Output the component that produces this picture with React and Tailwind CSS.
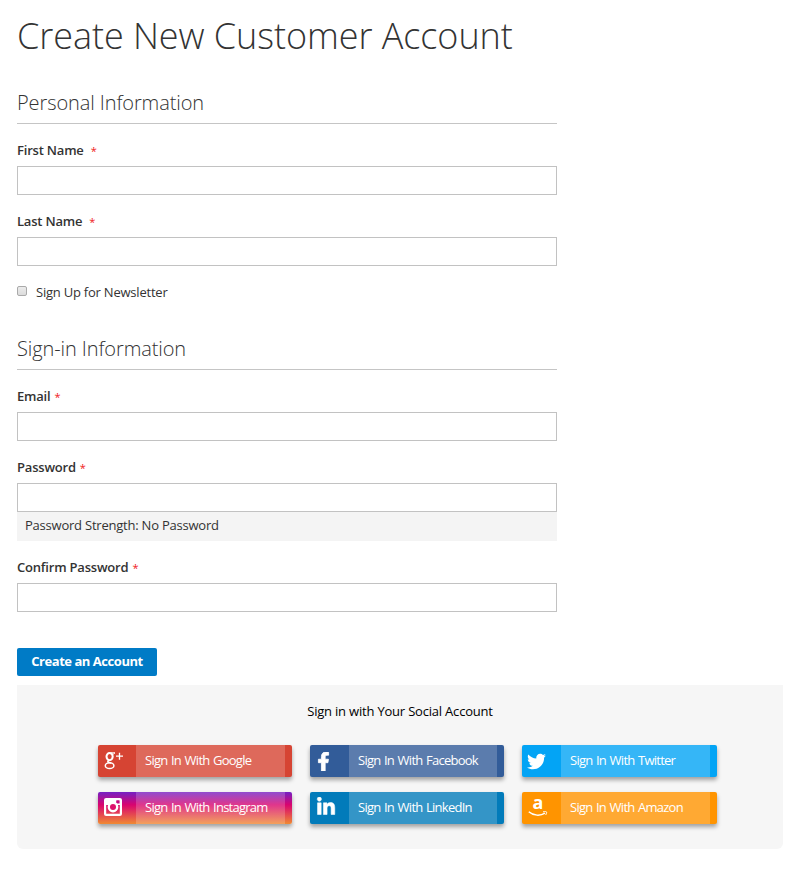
import { FaFacebookF, FaLinkedinIn, FaTwitter } from "react-icons/fa";

const GooglePlusIcon = () => (
  <svg width="20" height="20" viewBox="0 0 20 20" fill="none" stroke="currentColor">
    <ellipse cx="5.6" cy="5.6" rx="3.1" ry="3.6" strokeWidth="2" />
    <path d="M6.5 1.8H11L9.6 3H7.5" strokeWidth="1" />
    <path d="M5.2 9.3C2.6 10.6 4.2 11.7 7 12" strokeWidth="1.7" />
    <ellipse cx="5.6" cy="14.7" rx="4.3" ry="2.9" strokeWidth="1.5" />
    <path d="M12 5.2H19M15.5 1.7V8.7" strokeWidth="1.3" />
  </svg>
);

const InstagramIcon = () => (
  <svg width="18" height="18" viewBox="0 0 18 18" fill="none" stroke="currentColor">
    <rect x="1.1" y="1.1" width="15.8" height="15.8" rx="1" strokeWidth="2.2" />
    <path d="M1 1H17V7H12.5A4.3 4.3 0 0 0 5.5 7H1Z" fill="currentColor" stroke="none" />
    <rect x="12.2" y="2.2" width="3.4" height="3.4" rx=".6" fill="#c40880" stroke="none" />
    <circle cx="9" cy="9" r="4.2" strokeWidth="2.4" fill="#dd126d" />
  </svg>
);

const AmazonIcon = () => (
  <span className="flex h-5 w-5 flex-col items-center">
    <span className="h-[14px] text-[18px] leading-[10px] font-bold tracking-normal">a</span>
    <svg width="20" height="6" viewBox="0 0 20 6" fill="none" stroke="currentColor">
      <path d="M.8 .8C5.5 5 12.5 5 17 2.2" strokeWidth="1.5" />
      <path d="M15 .9C17 .4 18.3 .5 18.6 1C18.8 1.8 18.3 3 17.6 4" strokeWidth="1" />
    </svg>
  </span>
);

const socials = [
  { name: "Google", icon: <GooglePlusIcon />, color: "bg-[#d64433]", pad: "w-[38px] pl-1.5" },
  {
    name: "Facebook",
    icon: <FaFacebookF size={19} stroke="currentColor" strokeWidth={22} />,
    color: "bg-[#325c99]",
    pad: "w-[39px] pl-1",
  },
  { name: "Twitter", icon: <FaTwitter size={19} />, color: "bg-[#03a4f5]", pad: "w-[39px] pl-[5px]" },
  {
    name: "Instagram",
    icon: <InstagramIcon />,
    color: "bg-linear-to-b/srgb from-[#7420c4] via-[#d9046f] via-40% to-[#f08a33]",
    pad: "w-[38px] pl-1.5 pb-0.5",
  },
  {
    name: "LinkedIn",
    icon: <FaLinkedinIn size={20} stroke="currentColor" strokeWidth={14} />,
    color: "bg-[#027bba]",
    pad: "w-[39px] pl-1.5 pb-0.5",
  },
  { name: "Amazon", icon: <AmazonIcon />, color: "bg-[#ff9400]", pad: "w-[39px] pl-1.5 pb-0.5" },
];

const Field = ({ label, type = "text", gap = "ml-1", children }) => (
  <div className="mb-[17px]">
    <label className="block h-[25px] text-[13px] leading-[18px] font-semibold tracking-[-0.2px] text-[#333]">
      {label}
      <span className={`${gap} text-[11px] font-normal text-[#f01a1a]`}>*</span>
    </label>
    <input type={type} className="block h-[29px] w-full border border-[#c2c2c2] bg-white px-2" />
    {children}
  </div>
);

const Legend = ({ children }) => (
  <h2 className="mb-[17px] h-[34px] border-b border-[#c5c5c5] text-[20px] leading-[25px] font-light tracking-[-0.1px] text-[#333]">
    {children}
  </h2>
);

const SocialButton = ({ social }) => (
  <button
    className={`flex h-8 rounded-[2px] text-left text-white shadow-[0_3px_4px_rgba(0,0,0,0.35)] ${social.color}`}
  >
    <span className={`flex h-8 items-center ${social.pad}`}>{social.icon}</span>
    <span className="mr-[7px] h-8 flex-1 bg-white/20 pl-[9px] text-[13px] leading-[31px] tracking-[-0.75px] [word-spacing:0.9px] whitespace-nowrap">
      Sign In With {social.name}
    </span>
  </button>
);

const App = () => {
  return (
    <div className="h-[887px] bg-white px-[17px] pt-[9px] font-['Open_Sans',sans-serif] text-[13px] tracking-[-0.22px] text-[#333]">
      <h1 className="h-[81px] text-[36px] leading-[54px] font-light tracking-[-0.06px] whitespace-nowrap">
        Create New Customer Account
      </h1>

      <form className="w-[540px]">
        <Legend>Personal Information</Legend>
        <Field label="First Name" gap="ml-[7px]" />
        <Field label="Last Name" gap="ml-[7px]" />
        <div className="mb-[35px] flex h-[18px] items-center">
          <span className="mr-[9px] mb-0.5 size-2.5 rounded-[2px] border border-[#aaa] bg-linear-to-b from-[#ececec] to-[#dcdcdc]" />
          <label className="leading-[18px]">Sign Up for Newsletter</label>
        </div>

        <Legend>Sign-in Information</Legend>
        <Field label="Email" />
        <Field label="Password" type="password">
          <div className="h-[29px] bg-[#f4f4f4] pl-2 leading-[27px]">
            Password Strength: No Password
          </div>
        </Field>
        <Field label="Confirm Password" type="password" />

        <button
          type="button"
          className="mt-[36px] mb-[9px] block h-7 w-[140px] rounded-[2px] bg-[#007bc6] pb-0.5 text-[13px] leading-[25px] font-bold tracking-[-0.46px] text-white"
        >
          Create an Account
        </button>
      </form>

      <section className="h-[164px] w-[766px] rounded-b-md bg-[#f6f6f6] pt-[17px] text-black">
        <p className="h-[43px] text-center leading-[18px] tracking-[-0.2px]">
          Sign in with Your Social Account
        </p>
        <div className="ml-[81px] grid grid-cols-[194px_194px_195px] gap-x-[18px] gap-y-[15px]">
          {socials.map((social) => (
            <SocialButton key={social.name} social={social} />
          ))}
        </div>
      </section>
    </div>
  );
};

export default App;
